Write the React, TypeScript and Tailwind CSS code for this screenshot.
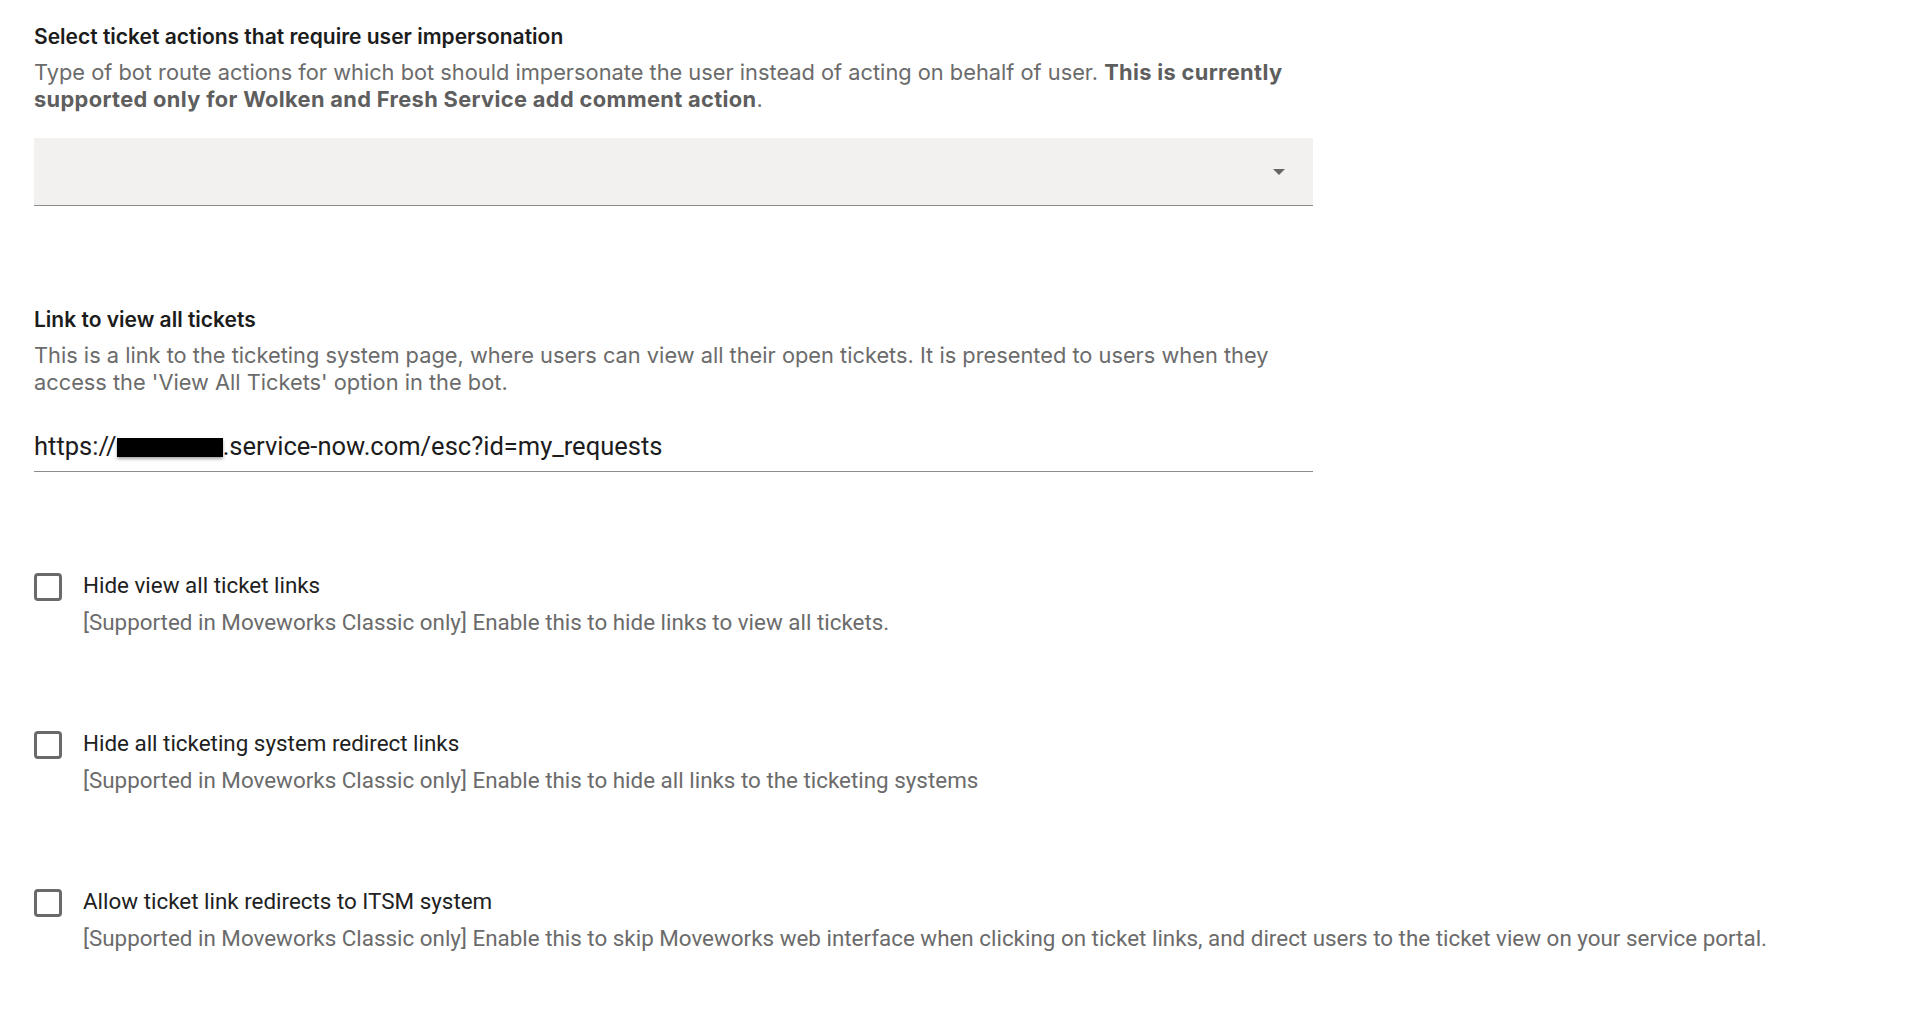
import React from 'react'

const options = [
  {
    label: 'Hide view all ticket links',
    help: '[Supported in Moveworks Classic only] Enable this to hide links to view all tickets.',
  },
  {
    label: 'Hide all ticketing system redirect links',
    help: '[Supported in Moveworks Classic only] Enable this to hide all links to the ticketing systems',
  },
  {
    label: 'Allow ticket link redirects to ITSM system',
    help: '[Supported in Moveworks Classic only] Enable this to skip Moveworks web interface when clicking on ticket links, and direct users to the ticket view on your service portal.',
  },
]

function FieldHeader({ title, children }: { title: string; children: React.ReactNode }) {
  return (
    <div className="font-['Inter',sans-serif]">
      <h3 className="text-[21px] leading-6 font-semibold text-[#1c1c1c]">{title}</h3>
      <p className="mt-[10px] text-[21.8px] leading-[27px] text-[#6b6b6b]">{children}</p>
    </div>
  )
}

function Checkbox({ label, help }: { label: string; help: string }) {
  return (
    <div className="flex gap-[21px] font-['Roboto',sans-serif]">
      <div className="mt-[2px] w-[28px] h-[28px] shrink-0 rounded-[4px] border-[3px] border-[#6a6a6a]" />
      <div>
        <div className="text-[22.4px] leading-7 text-[#212121]">{label}</div>
        <div className="mt-[9px] text-[22.4px] leading-7 text-[#6b6b6b]">{help}</div>
      </div>
    </div>
  )
}

export default function App() {
  return (
    <div className="min-h-screen bg-white pl-[34px] pt-[25px]">
      <div className="w-[1279px]">
        <FieldHeader title="Select ticket actions that require user impersonation">
          Type of bot route actions for which bot should impersonate the user instead of acting on behalf of user.{' '}
          <span className="font-bold tracking-[0.35px] text-[#5e5e5e]">
            This is currently supported only for Wolken and Fresh Service add comment action
          </span>
          .
        </FieldHeader>

        <button className="mt-[25px] w-full h-[68px] flex items-center justify-end pr-[28px] bg-[#f2f1f0] border-b border-[#8c8c8c]">
          <svg width="12" height="6" viewBox="0 0 12 6">
            <path d="M0 0 L12 0 L6 6 Z" fill="#666" />
          </svg>
        </button>

        <div className="mt-[102px]">
          <FieldHeader title="Link to view all tickets">
            This is a link to the ticketing system page, where users can view all their open tickets. It is presented to users when they access the 'View All Tickets' option in the bot.
          </FieldHeader>
        </div>

        <div className="mt-[35px] pb-[10px] border-b border-[#8c8c8c] font-['Roboto',sans-serif] text-[25.5px] leading-[30px] text-[#1c1c1c]">
          https://
          <span className="inline-block align-middle w-[106px] h-[19px] bg-black shadow-[0_2px_3px_rgba(0,0,0,0.35)] -mt-[2px]" />
          .service-now.com/esc?id=my_requests
        </div>
      </div>

      <div className="mt-[99px] flex flex-col gap-[93px] pb-10">
        {options.map((o) => (
          <Checkbox key={o.label} label={o.label} help={o.help} />
        ))}
      </div>
    </div>
  )
}
